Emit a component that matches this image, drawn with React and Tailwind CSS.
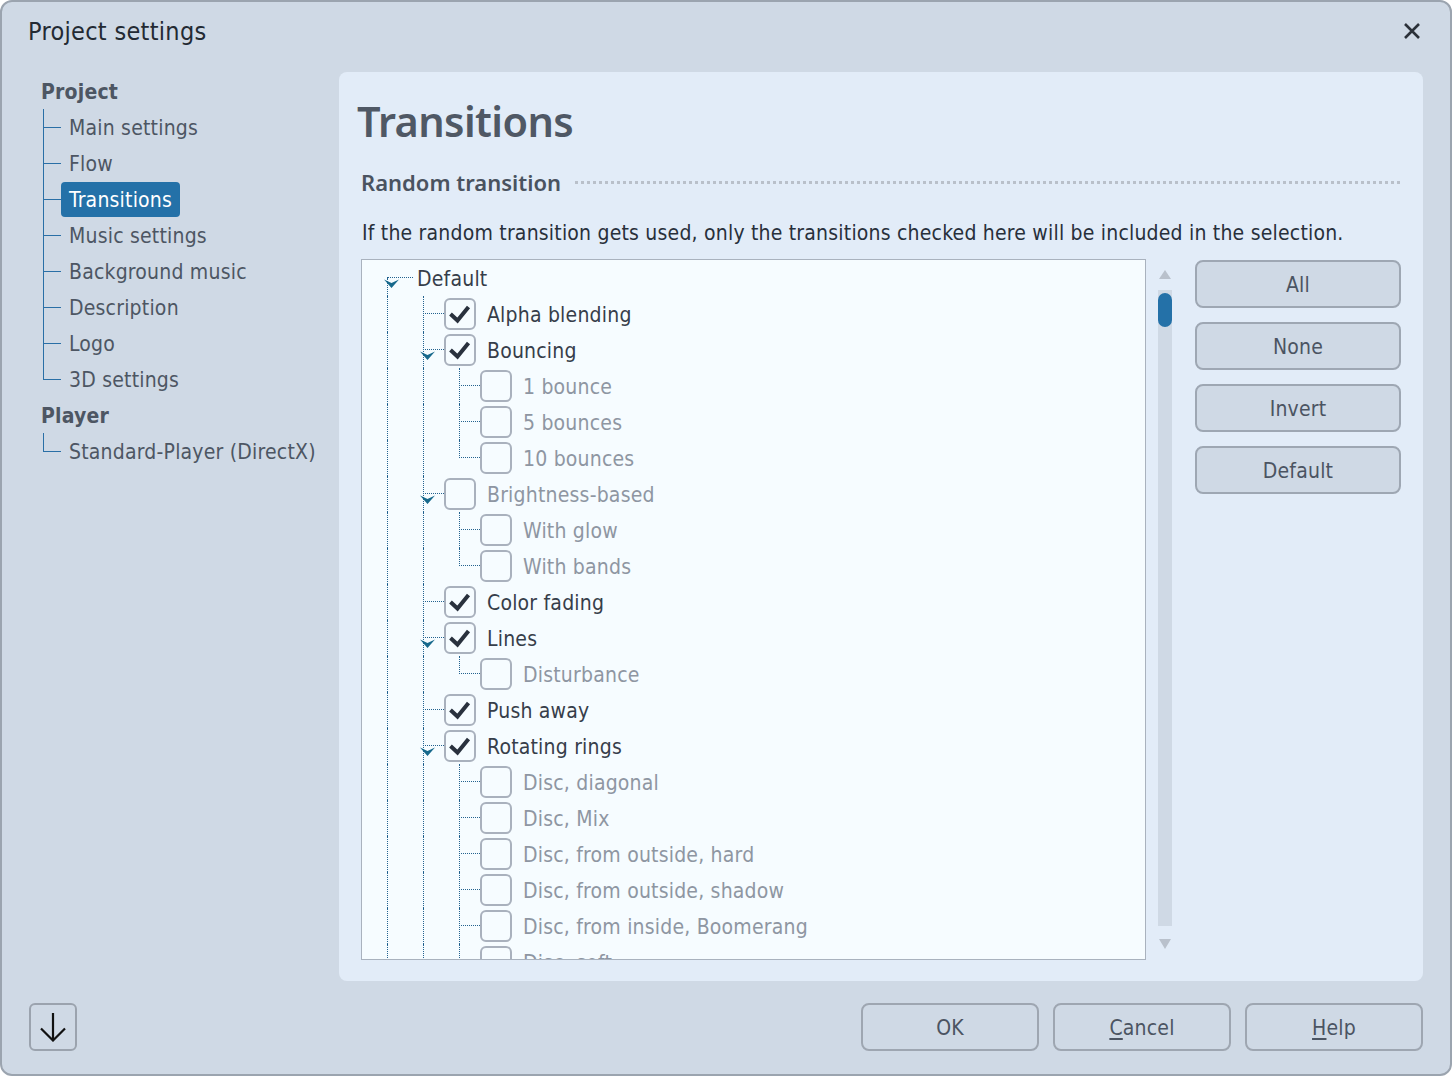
import React from "react";

const BODY = { fontFamily: '"DejaVu Sans Condensed", "DejaVu Sans", sans-serif' };
const HEAD = { fontFamily: '"Noto Sans", "Open Sans", sans-serif' };

const NAV = [
  { label: "Main settings" },
  { label: "Flow" },
  { label: "Transitions", active: true },
  { label: "Music settings" },
  { label: "Background music" },
  { label: "Description" },
  { label: "Logo" },
  { label: "3D settings", last: true },
];

const ROWS = [
  { label: "Default", level: 0, open: true, checked: true },
  { label: "Alpha blending", level: 1, checked: true },
  { label: "Bouncing", level: 1, checked: true, open: true },
  { label: "1 bounce", level: 2 },
  { label: "5 bounces", level: 2 },
  { label: "10 bounces", level: 2, last: true },
  { label: "Brightness-based", level: 1, open: true },
  { label: "With glow", level: 2 },
  { label: "With bands", level: 2, last: true },
  { label: "Color fading", level: 1, checked: true },
  { label: "Lines", level: 1, checked: true, open: true },
  { label: "Disturbance", level: 2, last: true },
  { label: "Push away", level: 1, checked: true },
  { label: "Rotating rings", level: 1, checked: true, open: true },
  { label: "Disc, diagonal", level: 2 },
  { label: "Disc, Mix", level: 2 },
  { label: "Disc, from outside, hard", level: 2 },
  { label: "Disc, from outside, shadow", level: 2 },
  { label: "Disc, from inside, Boomerang", level: 2 },
  { label: "Disc, soft", level: 2 },
];

function NavItem({ item }) {
  return (
    <div className="flex h-9 items-center">
      <div className="relative h-full w-[18px] shrink-0 ml-[2px]">
        <div
          className={
            "absolute left-0 top-0 border-l border-[#2a6fa6] " +
            (item.last ? "h-1/2" : "h-full")
          }
        />
        <div className="absolute left-0 top-1/2 w-full border-t border-[#2a6fa6]" />
      </div>
      <span
        className={
          "flex h-[35px] items-center rounded px-2 pt-1 " +
          (item.active ? "bg-[#2471a8] text-white" : "text-[#4d5663]")
        }
      >
        {item.label}
      </span>
    </div>
  );
}

function Arrow() {
  return (
    <svg width="15" height="9" viewBox="0 0 15 9" className="absolute left-[15px] top-[19px]">
      <path d="M0 0.5 L7.5 4 L15 0.5 L7.5 9 Z" fill="#17698c" />
    </svg>
  );
}

function Guide() {
  return (
    <div className="relative h-full w-9 shrink-0">
      <div className="absolute left-[18px] top-0 h-full border-l border-dotted border-[#23628f]" />
    </div>
  );
}

function Connector({ row }) {
  const root = row.level === 0;
  let v = "top-0 h-full";
  if (root) v = "top-[18px] h-[18px]";
  else if (row.last) v = "top-0 h-[18px]";
  return (
    <div className="relative h-full w-9 shrink-0">
      <div className={"absolute left-[18px] border-l border-dotted border-[#23628f] " + v} />
      <div
        className={
          "absolute left-[18px] top-[17px] border-t border-dotted border-[#23628f] " +
          (root ? "w-[26px]" : "w-[21px]")
        }
      />
      {row.open && <Arrow />}
    </div>
  );
}

function Checkbox({ checked }) {
  return (
    <div className="ml-[3px] flex h-8 w-8 shrink-0 items-center justify-center rounded-md border-2 border-[#a9b1bd] bg-[#f6fcff]">
      {checked && (
        <svg width="28" height="28" viewBox="0 0 28 28">
          <polyline
            points="4.5,14 11.5,20.5 22.5,7"
            fill="none"
            stroke="#29313d"
            strokeWidth="4"
          />
        </svg>
      )}
    </div>
  );
}

function TreeRow({ row }) {
  const guides = [];
  for (let k = 0; k < row.level; k++) guides.push(<Guide key={k} />);
  return (
    <div className="flex h-9 shrink-0 items-center">
      {guides}
      <Connector row={row} />
      {row.level > 0 && <Checkbox checked={row.checked} />}
      <span
        className={
          "whitespace-nowrap pt-1 " +
          (row.level === 0 ? "ml-3 " : "ml-[11px] ") +
          (row.checked ? "text-[#363e4a]" : "text-[#8e96a2]")
        }
      >
        {row.label}
      </span>
    </div>
  );
}

function SideButton({ children }) {
  return (
    <button className="h-12 w-full rounded-lg border-2 border-[#9ea7b3] bg-[#cfd9e5] pt-1 text-[21px] tracking-[0.2px] text-[#4b5462]">
      {children}
    </button>
  );
}

function FooterButton({ children }) {
  return (
    <button className="h-12 w-[178px] rounded-lg border-2 border-[#9ea6b1] bg-[#cfd9e5] pt-1 text-[21px] tracking-[0.2px] text-[#4b5462]">
      {children}
    </button>
  );
}

export default function App() {
  return (
    <div className="h-[1076px] w-[1452px] bg-white text-[21px] tracking-[0.2px]" style={BODY}>
      <div className="flex h-full w-full flex-col rounded-[12px] border-2 border-[#9ba4af] bg-[#cfd9e5]">
        {/* Title bar */}
        <div className="flex h-[70px] shrink-0 items-center justify-between pb-[12px] pl-[26px] pr-[29px]">
          <span className="pt-[2px] text-[25px] tracking-[0.3px] text-[#232a33]">Project settings</span>
          <svg width="18" height="18" viewBox="0 0 18 18">
            <path d="M2 2 L16 16 M16 2 L2 16" stroke="#2b3139" strokeWidth="2.6" />
          </svg>
        </div>

        {/* Body */}
        <div className="flex h-[909px] shrink-0">
          {/* Navigation */}
          <div className="w-[337px] shrink-0 pl-[39px] pt-px">
            <div className="flex h-9 items-center pt-1 font-bold text-[#4d5663]">Project</div>
            {NAV.map((item) => (
              <NavItem key={item.label} item={item} />
            ))}
            <div className="flex h-9 items-center pt-1 font-bold text-[#4d5663]">Player</div>
            <NavItem item={{ label: "Standard-Player (DirectX)", last: true }} />
          </div>

          {/* Panel */}
          <div className="flex w-[1084px] shrink-0 flex-col rounded-lg bg-[#e2ecf8] pl-[22px] pt-[20px]">
            <div className="-ml-[4px] flex h-[60px] items-center">
              <h1 className="text-[41.5px] font-semibold leading-none tracking-[-0.6px] text-[#4f5865]" style={HEAD}>
                Transitions
              </h1>
            </div>
            <div className="mt-[18px] flex h-6 items-center pr-[21px]">
              <span className="text-[22px] font-semibold tracking-normal text-[#4a5360]" style={HEAD}>
                Random transition
              </span>
              <div className="ml-[14px] h-[3px] flex-1 bg-[repeating-linear-gradient(90deg,#b9c0ca_0_3px,transparent_3px_6px)]" />
            </div>
            <div className="mt-[26px] flex h-6 items-center pl-px pt-1 text-[#28303b]">
              If the random transition gets used, only the transitions checked here will be included in the selection.
            </div>

            <div className="mt-[15px] flex">
              <div className="flex h-[701px] w-[785px] shrink-0 flex-col overflow-hidden border border-[#a9b2be] bg-[#f6fcff] pl-[7px]">
                {ROWS.map((row) => (
                  <TreeRow key={row.label} row={row} />
                ))}
              </div>

              {/* Scrollbar */}
              <div className="ml-[12px] flex h-[701px] w-[14px] shrink-0 flex-col items-center">
                <div className="flex h-[31px] items-start pt-[11px]">
                  <svg width="12" height="9" viewBox="0 0 12 9">
                    <path d="M6 0 L12 9 L0 9 Z" fill="#b9c1cc" />
                  </svg>
                </div>
                <div className="relative h-[636px] w-[14px] bg-[#cfd9e5]">
                  <div className="absolute left-0 top-[3px] h-[34px] w-[14px] rounded-full bg-[#2471a8]" />
                </div>
                <div className="flex items-start pt-[13px]">
                  <svg width="12" height="10" viewBox="0 0 12 10">
                    <path d="M0 0 L12 0 L6 10 Z" fill="#b9c1cc" />
                  </svg>
                </div>
              </div>

              {/* Buttons */}
              <div className="ml-[23px] mt-px flex w-[206px] shrink-0 flex-col gap-[14px]">
                <SideButton>All</SideButton>
                <SideButton>None</SideButton>
                <SideButton>Invert</SideButton>
                <SideButton>Default</SideButton>
              </div>
            </div>
          </div>
        </div>

        {/* Footer */}
        <div className="flex flex-1 items-start justify-between pl-[27px] pr-[27px] pt-[22px]">
          <button className="flex h-12 w-12 items-center justify-center rounded-md border-2 border-[#9ba3ae] bg-[#cfd9e5]">
            <svg width="28" height="30" viewBox="0 0 28 30">
              <path d="M14 1 L14 28 M2 16.5 L14 28.5 L26 16.5" fill="none" stroke="#111" strokeWidth="2.2" />
            </svg>
          </button>
          <div className="flex gap-[14px]">
            <FooterButton>OK</FooterButton>
            <FooterButton>
              <span className="underline underline-offset-[3px]">C</span>ancel
            </FooterButton>
            <FooterButton>
              <span className="underline underline-offset-[3px]">H</span>elp
            </FooterButton>
          </div>
        </div>
      </div>
    </div>
  );
}
